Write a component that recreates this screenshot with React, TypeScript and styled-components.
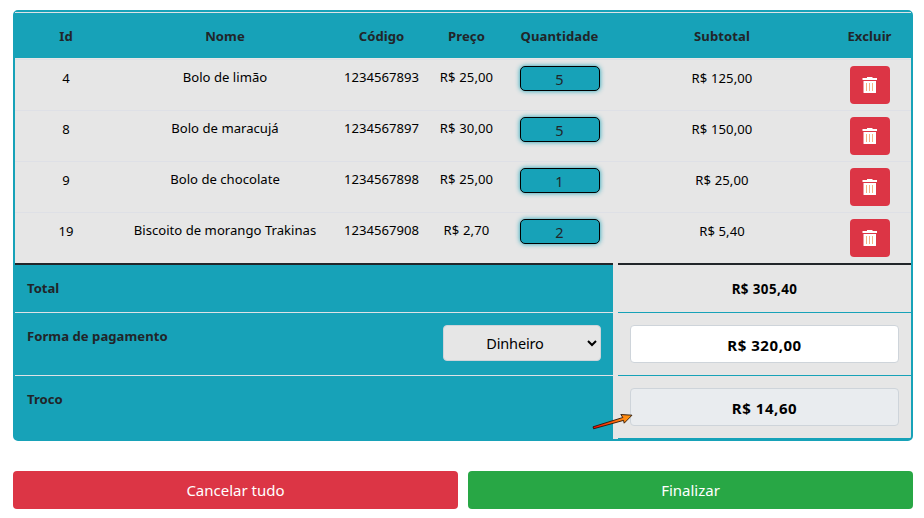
import React from 'react';
import styled, { createGlobalStyle } from 'styled-components';

const teal = '#17a2b8';
const gray = '#e6e6e6';
const columns = '102px 216px 97px 73px 113px 212px 83px';

const GlobalStyle = createGlobalStyle`
  *, *::before, *::after { box-sizing: border-box; }
  body {
    margin: 0;
    background: #fff;
    color: #212529;
    font-family: "Noto Sans", "Open Sans", sans-serif;
    font-size: 13.1px;
    line-height: 20px;
  }
  button, input, select { font-family: inherit; margin: 0; }
`;

const Page = styled.main`
  width: 924px;
  height: 518px;
  padding: 10px 11px 0 13px;
  overflow: hidden;
`;

const Panel = styled.section`
  position: relative;
  height: 431px;
  border: 2px solid ${teal};
  border-radius: 5px;
  background: ${gray};
`;

const HeaderRow = styled.div`
  display: grid;
  grid-template-columns: ${columns};
  height: 46px;
  padding-top: 13px;
  border-top: 1px solid #dee2e6;
  background: ${teal};
  font-weight: 700;
  letter-spacing: 0.08px;
  text-align: center;
`;

const HeaderCell = styled.div`
  white-space: nowrap;
`;

const ItemList = styled.div`
  padding-top: 1px;
`;

const ItemRow = styled.div`
  display: grid;
  grid-template-columns: ${columns};
  justify-items: center;
  align-items: start;
  height: 51px;
  padding-top: 6px;
  border-top: 1px solid #dee0e6;
  color: #000;
`;

const Cell = styled.div<{ $top: number; $spacing?: number }>`
  padding-top: ${(p) => p.$top}px;
  letter-spacing: ${(p) => p.$spacing ?? 0}px;
  white-space: nowrap;
`;

const Quantity = styled.input`
  width: 80px;
  height: 25px;
  padding: 0;
  border: 1px solid #000;
  border-radius: 5px;
  background: ${teal};
  box-shadow: 0 0 5px ${teal};
  color: #212529;
  font-size: 14.5px;
  text-align: center;
`;

const DeleteButton = styled.button`
  display: flex;
  align-items: center;
  justify-content: center;
  width: 40px;
  height: 38px;
  padding: 0;
  border: 0;
  border-radius: 4px;
  background: #dc3545;
`;

const Summary = styled.div`
  display: grid;
  grid-template-columns: 598px 293px;
  column-gap: 5px;
`;

const SummaryLabel = styled.div<{ $height: number; $first?: boolean }>`
  display: flex;
  align-items: flex-start;
  justify-content: space-between;
  height: ${(p) => p.$height}px;
  padding: ${(p) => (p.$first ? 13 : 12)}px 12px 0;
  border-top: ${(p) => (p.$first ? '2px solid #212529' : '1px solid #dee2e6')};
  background: ${teal};
  font-weight: 700;
`;

const LabelText = styled.span`
  padding-top: 1px;
  letter-spacing: 0.04px;
`;

const SummaryValue = styled.div<{ $height: number; $first?: boolean; $last?: boolean }>`
  height: ${(p) => p.$height}px;
  padding: ${(p) => (p.$first ? 14 : 12)}px 12px 0;
  border-top: ${(p) => (p.$first ? '2px solid #212529' : `1px solid ${teal}`)};
  border-bottom: ${(p) => (p.$last ? `1px solid ${teal}` : '0')};
  color: #000;
  font-size: 13.4px;
  font-weight: 700;
  letter-spacing: 0.4px;
  text-align: center;
`;

const PaymentSelect = styled.select`
  width: 158px;
  height: 36px;
  padding: 0 2px 0 0;
  border: 1px solid #ced4da;
  border-radius: 4px;
  background: ${gray};
  color: #000;
  font-size: 14.5px;
  letter-spacing: -0.15px;
  text-align: center;
  text-align-last: center;
`;

const MoneyInput = styled.input`
  display: block;
  width: 269px;
  height: 38px;
  padding: 1px 0 0;
  border: 1px solid #ced4da;
  border-radius: 4px;
  background: #fff;
  color: #000;
  font-size: 15px;
  font-weight: 700;
  letter-spacing: 0.55px;
  text-align: center;

  &:read-only { background: #e9ecef; }
`;

const Pointer = styled.svg`
  position: absolute;
  left: 575px;
  top: 398px;
`;

const Actions = styled.div`
  display: grid;
  grid-template-columns: 445px 445px;
  gap: 10px;
  margin-top: 30px;
`;

const ActionButton = styled.button<{ $color: string }>`
  height: 38px;
  padding: 0 0 1px;
  border: 0;
  border-radius: 4px;
  background: ${(p) => p.$color};
  color: #fff;
  font-size: 15px;
`;

const TrashIcon = () => (
  <svg width="16" height="18" viewBox="0 0 16 18" aria-hidden="true">
    <path fill="#fff" d="M5 1h5.500v1H15v2H.5V2H5zM1.500 5h12.500v11.500q0 .5-.5.5H2q-.5 0-.5-.5z" />
    <path stroke="#f5b183" strokeWidth="1" d="M4.500 7v8M7.500 7v8M10.500 7v8" />
  </svg>
);

const headers = ['Id', 'Nome', 'Código', 'Preço', 'Quantidade', 'Subtotal', 'Excluir'];

const items = [
  { id: 4, name: 'Bolo de limão', code: '1234567893', price: 'R$ 25,00', quantity: 5, subtotal: 'R$ 125,00' },
  { id: 8, name: 'Bolo de maracujá', code: '1234567897', price: 'R$ 30,00', quantity: 5, subtotal: 'R$ 150,00' },
  { id: 9, name: 'Bolo de chocolate', code: '1234567898', price: 'R$ 25,00', quantity: 1, subtotal: 'R$ 25,00' },
  { id: 19, name: 'Biscoito de morango Trakinas', code: '1234567908', price: 'R$ 2,70', quantity: 2, subtotal: 'R$ 5,40' },
];

export default function App() {
  return (
    <>
      <GlobalStyle />
      <Page>
        <Panel>
          <HeaderRow>
            {headers.map((label) => (
              <HeaderCell key={label}>{label}</HeaderCell>
            ))}
          </HeaderRow>
          <ItemList>
            {items.map((item) => (
              <ItemRow key={item.id}>
                <Cell $top={2}>{item.id}</Cell>
                <Cell $top={1} $spacing={0.02}>{item.name}</Cell>
                <Cell $top={1}>{item.code}</Cell>
                <Cell $top={1} $spacing={0.12}>{item.price}</Cell>
                <Quantity defaultValue={item.quantity} aria-label="Quantidade" />
                <Cell $top={2} $spacing={0.1}>{item.subtotal}</Cell>
                <DeleteButton aria-label="Excluir"><TrashIcon /></DeleteButton>
              </ItemRow>
            ))}
          </ItemList>
          <Summary>
            <SummaryLabel $height={49} $first>Total</SummaryLabel>
            <SummaryValue $height={49} $first>R$ 305,40</SummaryValue>
            <SummaryLabel $height={63}>
              <LabelText>Forma de pagamento</LabelText>
              <PaymentSelect defaultValue="Dinheiro" aria-label="Forma de pagamento">
                <option>Dinheiro</option>
              </PaymentSelect>
            </SummaryLabel>
            <SummaryValue $height={63}>
              <MoneyInput defaultValue="R$ 320,00" aria-label="Valor recebido" />
            </SummaryValue>
            <SummaryLabel $height={64}>
              <LabelText>Troco</LabelText>
            </SummaryLabel>
            <SummaryValue $height={64} $last>
              <MoneyInput readOnly value="R$ 14,60" aria-label="Troco" />
            </SummaryValue>
          </Summary>
          <Pointer width="46" height="24" viewBox="0 0 46 24" aria-hidden="true">
            <defs>
              <linearGradient id="heat" x1="0" x2="1" y1="0" y2="0">
                <stop offset="0" stopColor="#f00" />
                <stop offset="0.65" stopColor="#ff7a10" />
                <stop offset="1" stopColor="#ff9a10" />
              </linearGradient>
            </defs>
            <path
              d="M3 16.800 32.800 7.500 30.800 4.500 42 5.200 34.200 13.200 33.500 10.400 3.600 18.800z"
              fill="url(#heat)"
              stroke="#2b1608"
              strokeWidth="0.9"
              strokeLinejoin="round"
            />
          </Pointer>
        </Panel>
        <Actions>
          <ActionButton $color="#dc3545">Cancelar tudo</ActionButton>
          <ActionButton $color="#28a745">Finalizar</ActionButton>
        </Actions>
      </Page>
    </>
  );
}
